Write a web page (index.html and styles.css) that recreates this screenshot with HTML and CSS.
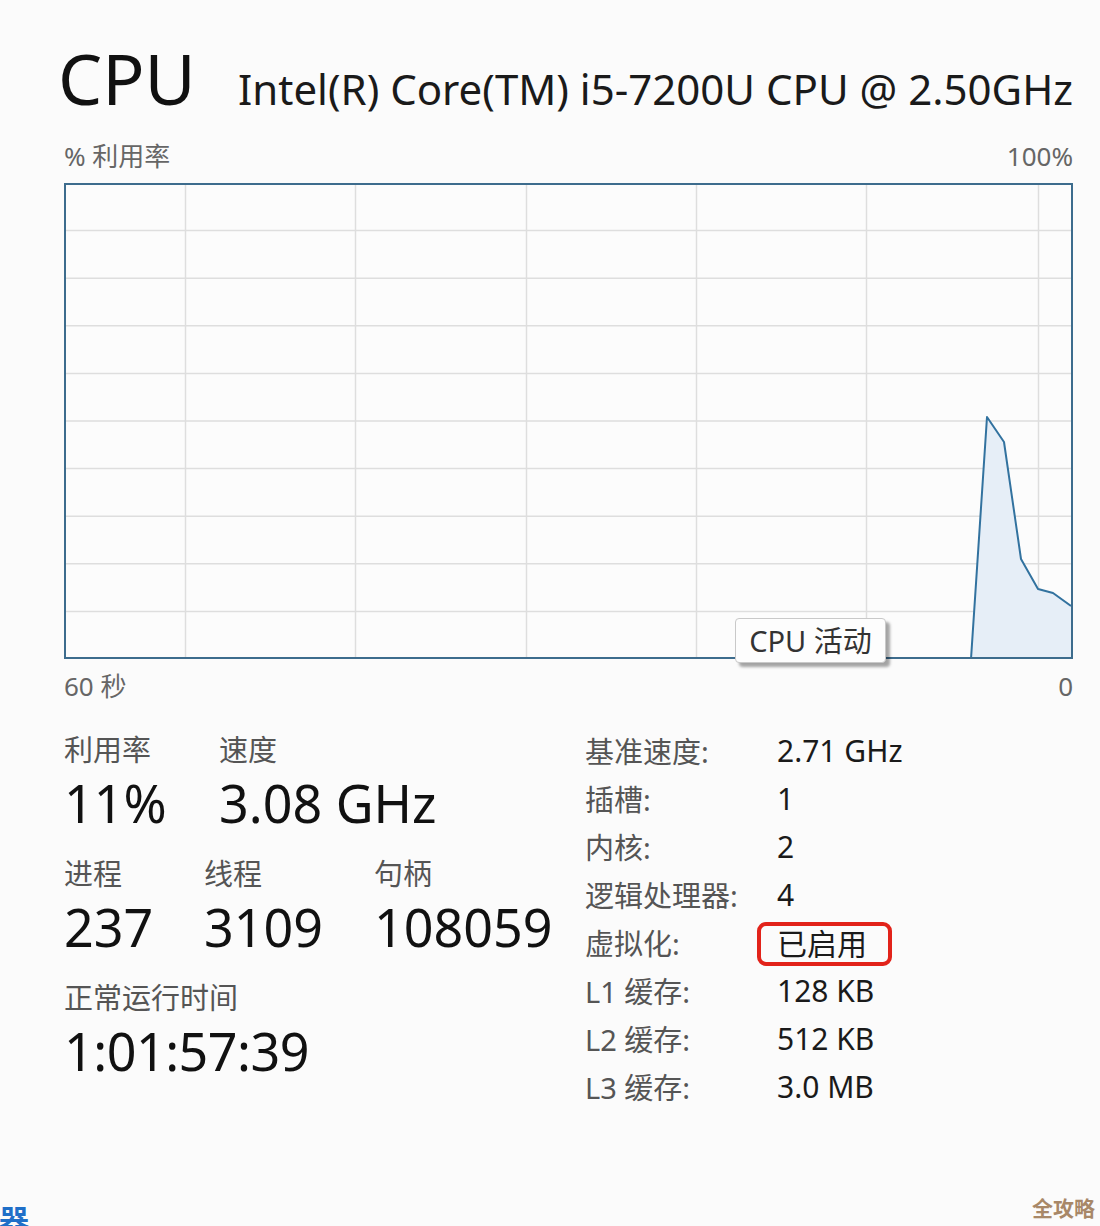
FILE: index.html
```html
<!DOCTYPE html>
<html lang="zh-CN">
<head>
    <meta charset="UTF-8">
    <meta name="viewport" content="width=device-width, initial-scale=1.0">
    <title>CPU</title>
    <link rel="stylesheet" href="styles.css">
</head>
<body>
    <div class="page">
        <div class="header">
            <h1 class="title">CPU</h1>
            <div class="model">Intel(R) Core(TM) i5-7200U CPU @ 2.50GHz</div>
        </div>

        <div class="axis axis-top">
            <span>% 利用率</span>
            <span>100%</span>
        </div>

        <div class="graph">
            <svg class="graph-svg" width="1005" height="472" viewBox="0 0 1005 472">
                <g class="grid">
                    <line x1="0" y1="45.6" x2="1005" y2="45.6"/>
                    <line x1="0" y1="93.2" x2="1005" y2="93.2"/>
                    <line x1="0" y1="140.8" x2="1005" y2="140.8"/>
                    <line x1="0" y1="188.4" x2="1005" y2="188.4"/>
                    <line x1="0" y1="236" x2="1005" y2="236"/>
                    <line x1="0" y1="283.6" x2="1005" y2="283.6"/>
                    <line x1="0" y1="331.2" x2="1005" y2="331.2"/>
                    <line x1="0" y1="378.8" x2="1005" y2="378.8"/>
                    <line x1="0" y1="426.4" x2="1005" y2="426.4"/>
                    <line x1="119.5" y1="0" x2="119.5" y2="472"/>
                    <line x1="289.5" y1="0" x2="289.5" y2="472"/>
                    <line x1="460.5" y1="0" x2="460.5" y2="472"/>
                    <line x1="630.5" y1="0" x2="630.5" y2="472"/>
                    <line x1="800.5" y1="0" x2="800.5" y2="472"/>
                    <line x1="972.5" y1="0" x2="972.5" y2="472"/>
                </g>
                <polygon class="area" points="905,472 921,232 938,257 955,374 972,404 987,408 1005,421 1005,472"/>
                <polyline class="usage" points="905,474 921,232 938,257 955,374 972,404 987,408 1005,421"/>
            </svg>
            <div class="tooltip">CPU 活动</div>
        </div>

        <div class="axis axis-bottom">
            <span>60 秒</span>
            <span>0</span>
        </div>

        <div class="stats">
            <div class="stats-left">
                <div class="stat-row row-a">
                    <div class="stat">
                        <div class="stat-label">利用率</div>
                        <div class="stat-value">11%</div>
                    </div>
                    <div class="stat">
                        <div class="stat-label">速度</div>
                        <div class="stat-value">3.08 GHz</div>
                    </div>
                </div>
                <div class="stat-row row-b">
                    <div class="stat">
                        <div class="stat-label">进程</div>
                        <div class="stat-value">237</div>
                    </div>
                    <div class="stat">
                        <div class="stat-label">线程</div>
                        <div class="stat-value">3109</div>
                    </div>
                    <div class="stat">
                        <div class="stat-label">句柄</div>
                        <div class="stat-value">108059</div>
                    </div>
                </div>
                <div class="stat-row">
                    <div class="stat">
                        <div class="stat-label">正常运行时间</div>
                        <div class="stat-value uptime">1:01:57:39</div>
                    </div>
                </div>
            </div>

            <div class="specs">
                <div class="spec-label">基准速度:</div><div class="spec-value">2.71 GHz</div>
                <div class="spec-label">插槽:</div><div class="spec-value">1</div>
                <div class="spec-label">内核:</div><div class="spec-value">2</div>
                <div class="spec-label">逻辑处理器:</div><div class="spec-value">4</div>
                <div class="spec-label">虚拟化:</div><div class="spec-value"><span class="marked">已启用<span class="mark-box"></span></span></div>
                <div class="spec-label">L1 缓存:</div><div class="spec-value">128 KB</div>
                <div class="spec-label">L2 缓存:</div><div class="spec-value">512 KB</div>
                <div class="spec-label">L3 缓存:</div><div class="spec-value">3.0 MB</div>
            </div>
        </div>
    </div>

    <div class="edge-glyph">器</div>
    <div class="watermark">全攻略</div>
</body>
</html>
```

FILE: styles.css
```css
body {
    margin: 0;
    padding: 0;
    background: #fbfbfb;
    font-family: "Noto Sans", "Noto Sans CJK SC", sans-serif;
    color: #1a1a1a;
    position: relative;
    height: 1226px;
    overflow: hidden;
}
.page {
    padding: 43px 27px 0 64px;
}
.header {
    display: flex;
    align-items: baseline;
    justify-content: space-between;
    height: 70px;
}
.title {
    margin: 0 0 0 -6px;
    font-size: 70px;
    line-height: 70px;
    font-weight: 400;
    color: #111;
}
.model {
    font-size: 42px;
    line-height: 70px;
    color: #1a1a1a;
    white-space: nowrap;
}
.axis {
    display: flex;
    justify-content: space-between;
    font-size: 26px;
    line-height: 36px;
    color: #666;
}
.axis-top {
    margin-top: 25px;
    margin-bottom: 9px;
}
.axis-bottom {
    margin-top: 9px;
}
.graph {
    position: relative;
    height: 476px;
    border: 2px solid #3d6c8d;
    box-sizing: border-box;
    background: #fcfcfc;
}
.graph-svg {
    display: block;
}
.grid line {
    stroke: #dedede;
    stroke-width: 1.5;
}
.area {
    fill: #e6eef7;
}
.usage {
    fill: none;
    stroke: #32729f;
    stroke-width: 2;
    stroke-linejoin: round;
}
.tooltip {
    position: absolute;
    left: 669px;
    top: 433px;
    width: 151px;
    height: 45px;
    box-sizing: border-box;
    background: #fdfdfd;
    border: 1px solid #c9c9c9;
    border-radius: 4px;
    box-shadow: 4px 4px 3px rgba(0,0,0,.35);
    font-size: 29px;
    line-height: 43px;
    text-align: center;
    color: #333;
}
.stats {
    display: flex;
    margin-top: 22px;
}
.stats-left {
    width: 521px;
    padding-top: 6px;
}
.stat-row {
    display: flex;
    margin-bottom: 18px;
}
.row-a .stat:first-child {
    width: 155px;
}
.row-b .stat:nth-child(1) {
    width: 140px;
}
.row-b .stat:nth-child(2) {
    width: 170px;
}
.stat-label {
    font-size: 29px;
    line-height: 36px;
    color: #555;
}
.stat-value {
    font-size: 52px;
    line-height: 70px;
    color: #111;
}
.uptime {
    letter-spacing: -0.5px;
}
.specs {
    display: grid;
    grid-template-columns: 192px auto;
    grid-auto-rows: 48px;
    align-items: center;
}
.spec-label {
    font-size: 29px;
    color: #555;
}
.spec-value {
    font-size: 30px;
    color: #1a1a1a;
}
.marked {
    position: relative;
}
.mark-box {
    position: absolute;
    left: -20px;
    top: 50%;
    margin-top: -22px;
    width: 135px;
    height: 44px;
    box-sizing: border-box;
    border: 4px solid #e2231a;
    border-radius: 9px;
}
.edge-glyph {
    position: absolute;
    left: -1px;
    top: 1205px;
    font-size: 30px;
    line-height: 30px;
    font-weight: 700;
    color: #1f6fc8;
}
.watermark {
    position: absolute;
    right: 5px;
    top: 1194px;
    font-size: 21px;
    line-height: 28px;
    font-weight: 700;
    color: #a88868;
}
```
